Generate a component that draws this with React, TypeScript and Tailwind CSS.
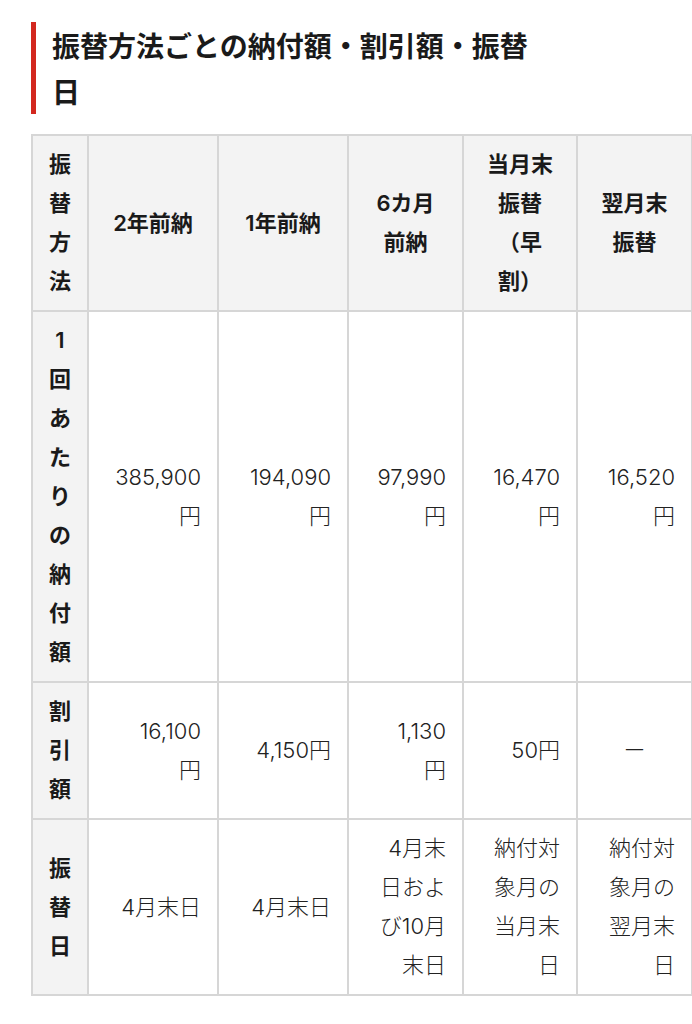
import React from "react";

const font = { fontFamily: '"Noto Sans CJK JP", "Noto Sans", sans-serif' };
const tableFont = { fontFamily: 'Inter, "Noto Sans CJK JP", sans-serif' };

function Lines({ lines }: { lines: string[] }) {
  return (
    <>
      {lines.map((l, i) => (
        <span key={i} className="block whitespace-nowrap">
          {l}
        </span>
      ))}
    </>
  );
}

const th = "border-2 border-[#d6d6d6] bg-[#f3f3f3] font-semibold text-[#1a1a1a] text-center align-middle px-[6px] py-[9px]";
const td = "border-2 border-[#d6d6d6] bg-white font-light text-[#222] text-right align-middle pl-[8px] pr-[16px] py-[9px]";

export default function App() {
  const header: string[][] = [
    ["2年前納"],
    ["1年前納"],
    ["6カ月", "前納"],
    ["当月末", "振替", "（早", "割）"],
    ["翌月末", "振替"],
  ];
  const rows: { head: string[]; cells: { lines: string[]; center?: boolean }[] }[] = [
    {
      head: ["1", "回", "あ", "た", "り", "の", "納", "付", "額"],
      cells: [
        { lines: ["385,900", "円"] },
        { lines: ["194,090", "円"] },
        { lines: ["97,990", "円"] },
        { lines: ["16,470", "円"] },
        { lines: ["16,520", "円"] },
      ],
    },
    {
      head: ["割", "引", "額"],
      cells: [
        { lines: ["16,100", "円"] },
        { lines: ["4,150円"] },
        { lines: ["1,130", "円"] },
        { lines: ["50円"] },
        { lines: ["ー"], center: true },
      ],
    },
    {
      head: ["振", "替", "日"],
      cells: [
        { lines: ["4月末日"] },
        { lines: ["4月末日"] },
        { lines: ["4月末", "日およ", "び10月", "末日"] },
        { lines: ["納付対", "象月の", "当月末", "日"] },
        { lines: ["納付対", "象月の", "翌月末", "日"] },
      ],
    },
  ];

  return (
    <div className="min-h-[1024px] w-[692px] bg-white pt-[22px]" style={font}>
      <h2 className="ml-[31px] w-[520px] border-l-[5px] border-[#d3281f] pl-[16px] text-[28px] font-semibold leading-[46px] text-[#1a1a1a]">
        振替方法ごとの納付額・割引額・振替日
      </h2>
      <table
        className="ml-[31px] mt-[20px] w-[660px] table-fixed border-collapse text-[22px] leading-[39px]"
        style={tableFont}
      >
        <colgroup>
          <col className="w-[56px]" />
          <col className="w-[130px]" />
          <col className="w-[130px]" />
          <col className="w-[115px]" />
          <col className="w-[114px]" />
          <col className="w-[115px]" />
        </colgroup>
        <thead>
          <tr>
            <th className={th}>
              <Lines lines={["振", "替", "方", "法"]} />
            </th>
            {header.map((h, i) => (
              <th key={i} className={th}>
                <Lines lines={h} />
              </th>
            ))}
          </tr>
        </thead>
        <tbody>
          {rows.map((r, i) => (
            <tr key={i}>
              <th className={th}>
                <Lines lines={r.head} />
              </th>
              {r.cells.map((c, j) => (
                <td
                  key={j}
                  className={
                    c.center
                      ? "border-2 border-[#d6d6d6] bg-white font-light text-[#222] text-center align-middle px-[8px] py-[9px]"
                      : td
                  }
                >
                  <Lines lines={c.lines} />
                </td>
              ))}
            </tr>
          ))}
        </tbody>
      </table>
    </div>
  );
}
